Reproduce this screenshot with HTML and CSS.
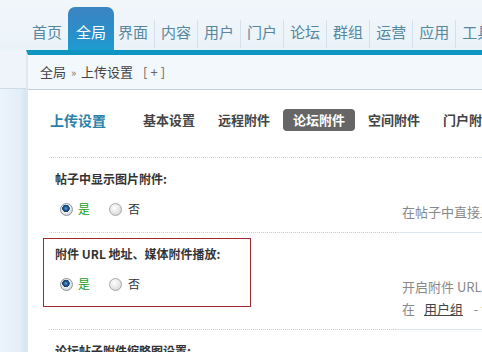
FILE: index.html
```html
<!DOCTYPE html>
<html lang="zh-CN">
<head>
    <meta charset="UTF-8">
    <title>上传设置</title>
    <link rel="stylesheet" href="styles.css">
</head>
<body>
    <div class="header">
        <ul class="nav">
            <li><a href="#">首页</a></li>
            <li class="active"><a href="#">全局</a></li>
            <li><a href="#">界面</a></li>
            <li><a href="#">内容</a></li>
            <li><a href="#">用户</a></li>
            <li><a href="#">门户</a></li>
            <li><a href="#">论坛</a></li>
            <li><a href="#">群组</a></li>
            <li><a href="#">运营</a></li>
            <li><a href="#">应用</a></li>
            <li><a href="#">工具</a></li>
        </ul>
    </div>

    <div class="frame">
        <div class="side"></div>
        <div class="main">
            <div class="crumb">全局 <span class="sep">&raquo;</span> 上传设置 <span class="add">[+]</span></div>

            <div class="content">
                <div class="title-row">
                    <h3>上传设置</h3>
                    <ul class="tabs">
                        <li>基本设置</li>
                        <li>远程附件</li>
                        <li class="current">论坛附件</li>
                        <li>空间附件</li>
                        <li>门户附件</li>
                    </ul>
                </div>

                <div class="setting">
                    <div class="label">帖子中显示图片附件:</div>
                    <div class="value-row">
                        <div class="value">
                            <span class="radio checked"></span><span class="yes">是</span>
                            <span class="radio"></span><span class="no">否</span>
                        </div>
                        <div class="tip">在帖子中直接显示图片附件，而不需要点击附件链接</div>
                    </div>
                </div>

                <div class="setting">
                    <div class="highlight"></div>
                    <div class="label">附件 URL 地址、媒体附件播放:</div>
                    <div class="value-row">
                        <div class="value">
                            <span class="radio checked"></span><span class="yes">是</span>
                            <span class="radio"></span><span class="no">否</span>
                        </div>
                        <div class="tip">
                            开启附件 URL 地址后，上传附件的地址将直接显示<br>
                            在 <a href="#">用户组</a> - 论坛相关 中设置允许使用的用户组
                        </div>
                    </div>
                </div>

                <div class="setting">
                    <div class="label">论坛帖子附件缩略图设置:</div>
                </div>
            </div>
        </div>
    </div>
</body>
</html>
```

FILE: styles.css
```css
body {
    margin: 0;
    padding: 0;
    font-family: "Noto Sans CJK SC", "Liberation Sans", sans-serif;
    font-size: 12px;
    color: #333;
    background: #eef4fa;
    overflow: hidden;
    width: 482px;
    height: 352px;
}
.header {
    height: 50px;
    background: linear-gradient(#f2f7fb, #eaf2f9);
}
.nav {
    list-style: none;
    margin: 0;
    padding: 0 0 0 26px;
    height: 50px;
    display: flex;
    align-items: flex-end;
    white-space: nowrap;
}
.nav li a {
    display: block;
    height: 28px;
    line-height: 24px;
    padding: 0 6px;
    margin-bottom: 2px;
    border-left: 1px solid #d4e1eb;
    font-size: 15px;
    color: #56879e;
    text-decoration: none;
}
.nav li:first-child a,
.nav li.active a,
.nav li.active + li a {
    border-left: none;
}
.nav li.active a {
    height: 43px;
    line-height: 50px;
    margin-bottom: 0;
    padding: 0 8px;
    color: #fff;
    border-radius: 7px 7px 0 0;
    background: linear-gradient(#3b84c2, #2a8fc9 60%, #1d9cd0);
}
.nav li.active + li a {
    padding-left: 4px;
}
.frame {
    display: flex;
    height: 302px;
}
.side {
    width: 26px;
    background: linear-gradient(#eef4fa 0, #eef4fa 38px, #cfdce6 38px, #cfdce6 39px, transparent 39px),
                linear-gradient(to right, #ecf4fb, #e2eef8 80%, #d3e4f2);
}
.main {
    flex: 1;
    border-top: 5px solid #0f95c2;
    border-left: 2px solid #dce8f1;
    background: #fff;
    min-width: 0;
}
.crumb {
    height: 34px;
    line-height: 34px;
    padding-left: 12px;
    background: #f3f8fc;
    border-bottom: 1px solid #c3d0da;
    color: #444;
    font-size: 13px;
}
.crumb .sep {
    color: #777;
    font-size: 11px;
    margin: 0 2px;
}
.crumb .add {
    margin-left: 7px;
    color: #666;
    letter-spacing: 3px;
}
.content {
    padding: 19px 0 0 21px;
}
.title-row {
    display: flex;
    align-items: center;
    height: 22px;
    padding-bottom: 26px;
    border-bottom: 1px dotted #c2d4e0;
    white-space: nowrap;
}
.title-row h3 {
    margin: 0 0 0 1px;
    font-size: 14px;
    color: #2a82a8;
}
.tabs {
    list-style: none;
    margin: 0 0 0 27px;
    padding: 0;
    display: flex;
}
.tabs li {
    height: 22px;
    line-height: 22px;
    padding: 0 10px;
    margin-right: 3px;
    font-size: 13px;
    font-weight: bold;
    color: #444;
}
.tabs li.current {
    background: #666;
    color: #fff;
    border-radius: 4px;
}
.setting {
    position: relative;
}
.label {
    padding: 13px 0 6px 6px;
    line-height: 16px;
    font-weight: bold;
    font-size: 12px;
    color: #333;
    white-space: nowrap;
}
.value-row {
    display: flex;
}
.value {
    width: 336px;
    padding: 8px 0 0 11px;
    line-height: 16px;
    border-bottom: 1px dotted #c8c8c8;
    display: flex;
    align-items: flex-start;
}
.tip {
    flex: 1;
    padding: 8px 0 9px 6px;
    line-height: 22px;
    font-size: 13px;
    color: #888;
    white-space: nowrap;
    overflow: hidden;
    border-bottom: 1px solid #d9e8f1;
}
.tip a {
    color: #444;
    margin: 0 8px 0 6px;
}
.radio {
    display: inline-block;
    width: 11px;
    height: 11px;
    margin-top: 2px;
    border-radius: 50%;
    border: 1px solid #a8a8a8;
    background: radial-gradient(circle at 40% 35%, #fff, #ddd 70%, #c4c4c4);
}
.radio.checked {
    border-color: #8b95a0;
    background: radial-gradient(circle at 45% 40%, #6fa8d8 0, #1d5a94 2px, #153f6c 3.5px, #f4f4f4 4px, #d8d8d8 6px);
}
.yes {
    color: #22a022;
    margin: 0 19px 0 5px;
}
.no {
    margin-left: 6px;
}
.highlight {
    position: absolute;
    left: -6px;
    top: 5px;
    width: 206px;
    height: 67px;
    border: 1px solid #a8262d;
}
```
